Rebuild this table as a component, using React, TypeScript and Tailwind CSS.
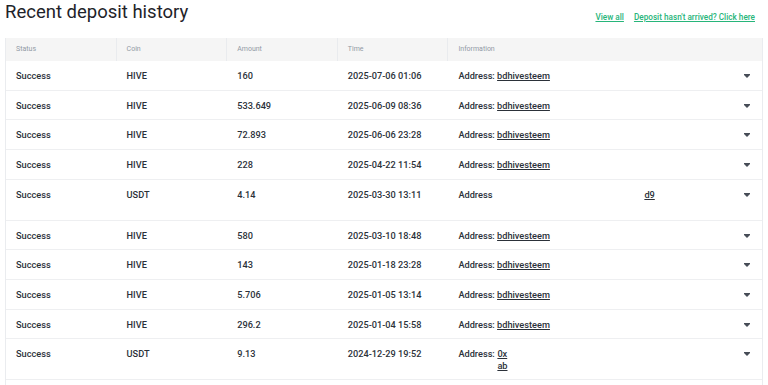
type Deposit = {
  coin: string;
  amount: string;
  time: string;
  tall?: boolean;
  info: "hive" | "usdt-a" | "usdt-b";
};

const deposits: Deposit[] = [
  { coin: "HIVE", amount: "160", time: "2025-07-06 01:06", info: "hive" },
  { coin: "HIVE", amount: "533.649", time: "2025-06-09 08:36", info: "hive" },
  { coin: "HIVE", amount: "72.893", time: "2025-06-06 23:28", info: "hive" },
  { coin: "HIVE", amount: "228", time: "2025-04-22 11:54", info: "hive" },
  { coin: "USDT", amount: "4.14", time: "2025-03-30 13:11", info: "usdt-a", tall: true },
  { coin: "HIVE", amount: "580", time: "2025-03-10 18:48", info: "hive" },
  { coin: "HIVE", amount: "143", time: "2025-01-18 23:28", info: "hive" },
  { coin: "HIVE", amount: "5.706", time: "2025-01-05 13:14", info: "hive" },
  { coin: "HIVE", amount: "296.2", time: "2025-01-04 15:58", info: "hive" },
  { coin: "USDT", amount: "9.13", time: "2024-12-29 19:52", info: "usdt-b", tall: true },
];

const cols = "grid grid-cols-[110.6px_110.6px_110.6px_110.6px_1fr]";

function Caret() {
  return (
    <svg width="6" height="4" viewBox="0 0 6 4" className="mt-[4px] shrink-0">
      <path d="M0 0 H6 V1 L3 4 L0 1 Z" fill="#474d57" />
    </svg>
  );
}

function Info({ kind }: { kind: Deposit["info"] }) {
  if (kind === "usdt-a") {
    return (
      <div className="flex">
        <span className="inline-block w-[186px]">Address</span>
        <a className="underline">d9</a>
      </div>
    );
  }
  if (kind === "usdt-b") {
    return (
      <div className="flex">
        <span className="w-[39px]">Address:</span>
        <div className="flex flex-col">
          <a className="underline">0x</a>
          <a className="underline">ab</a>
        </div>
      </div>
    );
  }
  return (
    <div>
      Address: <a className="underline">bdhivesteem</a>
    </div>
  );
}

export default function App() {
  return (
    <div className="w-[768px] h-[385px] overflow-hidden bg-white text-[#1e2329] font-['Roboto',sans-serif]">
      <div className="flex justify-between h-[38px] px-[5px]">
        <h1 className="pt-[1px] text-[18.5px] leading-[22px] font-normal">Recent deposit history</h1>
        <div className="flex gap-[10px] pt-[12px] pr-[8px] text-[8.2px] leading-[11px] font-medium text-[#27b57a]">
          <a className="underline">View all</a>
          <a className="underline">Deposit hasn't arrived? Click here</a>
        </div>
      </div>

      <div className="mx-[5px] border-x border-[#eaecef]">
        <div className={`${cols} h-[23px] bg-[#f5f5f5] text-[7px] text-[#929aa5]`}>
          {["Status", "Coin", "Amount", "Time", "Information"].map((h, i) => (
            <div
              key={h}
              className={`flex items-center pl-[10px] ${i < 4 ? "border-r border-[#e9ebee]" : ""}`}
            >
              {h}
            </div>
          ))}
        </div>

        {deposits.map((d, i) => (
          <div
            key={i}
            className={`${cols} ${d.tall ? "h-[40.8px]" : "h-[29.7px]"} border-b border-[#eeeff1] text-[9.2px] leading-[12px] font-medium text-[#2b3139]`}
          >
            <div className="pl-[10px] pt-[9px]">Success</div>
            <div className="pl-[10px] pt-[9px]">{d.coin}</div>
            <div className="pl-[10px] pt-[9px]">{d.amount}</div>
            <div className="pl-[10px] pt-[9px]">{d.time}</div>
            <div className="flex justify-between pl-[10px] pr-[12px] pt-[9px]">
              <Info kind={d.info} />
              <Caret />
            </div>
          </div>
        ))}
        <div className="h-[30px]" />
      </div>
    </div>
  );
}
